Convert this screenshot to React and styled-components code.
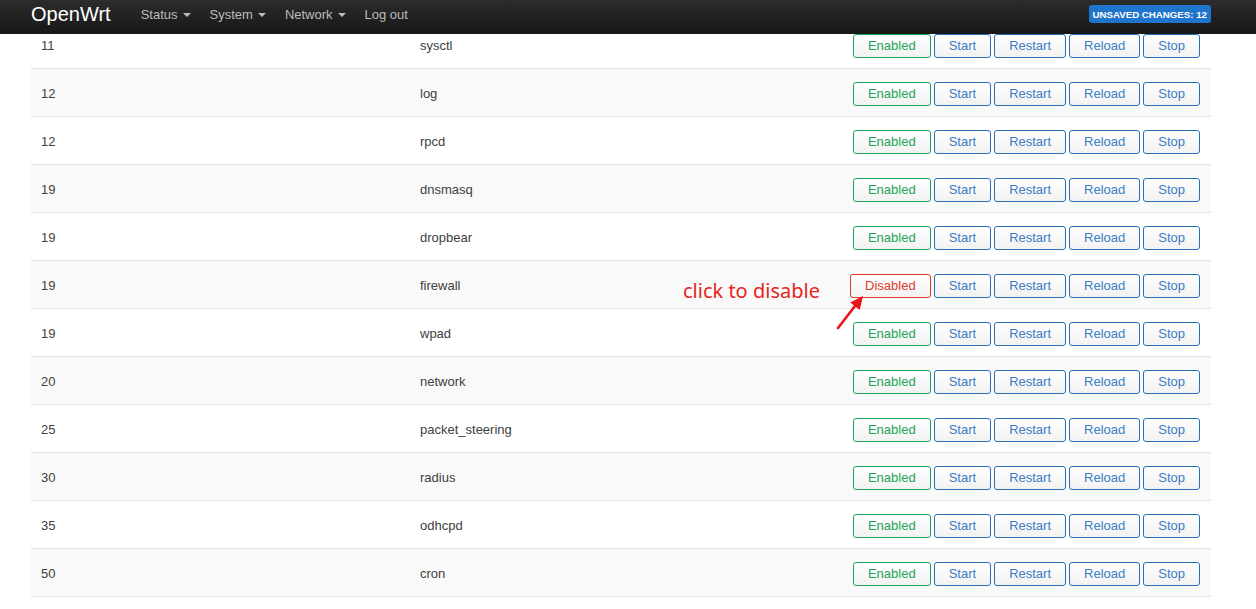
import React from "react"
import styled, { createGlobalStyle, css } from "styled-components"

const GlobalStyle = createGlobalStyle`
  body {
    margin: 0;
    background: #fff;
    font-family: "Liberation Sans", Arial, sans-serif;
    font-size: 13px;
    color: #404040;
  }
`

const Page = styled.div`
  width: 1256px;
  height: 609px;
  overflow: hidden;
  position: relative;
`

const NavBar = styled.header`
  position: fixed;
  top: 0;
  left: 0;
  right: 0;
  z-index: 10;
  height: 34px;
  box-sizing: border-box;
  background: linear-gradient(#2c2c2c, #171717);
  display: flex;
  align-items: flex-start;
  padding: 3px 45px 0 31px;
`

const Brand = styled.div`
  color: #fff;
  font-size: 20px;
  line-height: 23px;
  margin-right: 30px;
`

const Menu = styled.nav`
  display: flex;
  align-items: center;
  gap: 19px;
  flex: 1;
  height: 23px;
`

const MenuItem = styled.span`
  color: #bcbcbc;
  font-size: 13px;
  display: inline-flex;
  align-items: center;
  ${(p) =>
    p.$caret &&
    css`
      &::after {
        content: "";
        margin-left: 5px;
        border-top: 4px solid #bcbcbc;
        border-left: 4px solid transparent;
        border-right: 4px solid transparent;
      }
    `}
`

const Badge = styled.span`
  background: #1f74cc;
  color: #fff;
  font-weight: bold;
  font-size: 9.7px;
  border-radius: 3px;
  height: 18px;
  line-height: 19px;
  padding: 0 4px;
  margin-top: 2px;
`

const Content = styled.main`
  padding: 21px 45px 0 31px;
  position: relative;
`

const Table = styled.div`
  width: 1180px;
`

const Row = styled.div`
  display: grid;
  grid-template-columns: 379px 1fr auto;
  align-items: center;
  box-sizing: border-box;
  height: 48px;
  padding-top: 2px;
  border-bottom: 1px solid #e2e2e2;
  background: ${(p) => (p.$striped ? "#f9f9f9" : "#fff")};
`

const Cell = styled.div`
  padding: 0 10px;
  color: #404040;
`

const Actions = styled.div`
  display: flex;
  gap: 3px;
  padding: 0 11px 0 10px;
`

const tones = {
  green: { border: "#1ba35a", text: "#1ea55c" },
  red: { border: "#dd3a2e", text: "#dc3b30" },
  blue: { border: "#2a6fb5", text: "#3b7dc2" },
}

const Button = styled.button`
  font-family: "Liberation Sans", Arial, sans-serif;
  font-size: 13px;
  height: 24px;
  padding: 0 14px;
  border: 1px solid ${(p) => tones[p.$tone].border};
  color: ${(p) => tones[p.$tone].text};
  border-radius: 3px;
  background: linear-gradient(#fff, #f2f2f2);
  cursor: pointer;
`

const Note = styled.div`
  position: absolute;
  left: 683px;
  top: 277px;
  color: #e52521;
  font-family: "Noto Sans", "Open Sans", sans-serif;
  font-size: 20px;
  pointer-events: none;
`

const Arrow = styled.svg`
  position: absolute;
  left: 830px;
  top: 292px;
  pointer-events: none;
`

const rows = [
  ["11", "sysctl"],
  ["12", "log"],
  ["12", "rpcd"],
  ["19", "dnsmasq"],
  ["19", "dropbear"],
  ["19", "firewall", true],
  ["19", "wpad"],
  ["20", "network"],
  ["25", "packet_steering"],
  ["30", "radius"],
  ["35", "odhcpd"],
  ["50", "cron"],
  ["60", "sysfixtime"],
]

export default function App() {
  return (
    <Page>
      <GlobalStyle />
      <NavBar>
        <Brand>OpenWrt</Brand>
        <Menu>
          <MenuItem $caret>Status</MenuItem>
          <MenuItem $caret>System</MenuItem>
          <MenuItem $caret>Network</MenuItem>
          <MenuItem>Log out</MenuItem>
        </Menu>
        <Badge>UNSAVED CHANGES: 12</Badge>
      </NavBar>
      <Content>
        <Table>
          {rows.map(([prio, name, disabled], i) => (
            <Row key={name} $striped={i % 2 === 1}>
              <Cell>{prio}</Cell>
              <Cell>{name}</Cell>
              <Actions>
                {disabled ? (
                  <Button $tone="red">Disabled</Button>
                ) : (
                  <Button $tone="green">Enabled</Button>
                )}
                <Button $tone="blue">Start</Button>
                <Button $tone="blue">Restart</Button>
                <Button $tone="blue">Reload</Button>
                <Button $tone="blue">Stop</Button>
              </Actions>
            </Row>
          ))}
        </Table>
        <Note>click to disable</Note>
        <Arrow width="40" height="40" viewBox="0 0 40 40">
          <line x1="8" y1="36" x2="25" y2="14" stroke="#e8141a" strokeWidth="2.6" strokeLinecap="round" />
          <polygon points="33,4 29.7,17.9 20.3,10.5" fill="#e8141a" />
        </Arrow>
      </Content>
    </Page>
  )
}
